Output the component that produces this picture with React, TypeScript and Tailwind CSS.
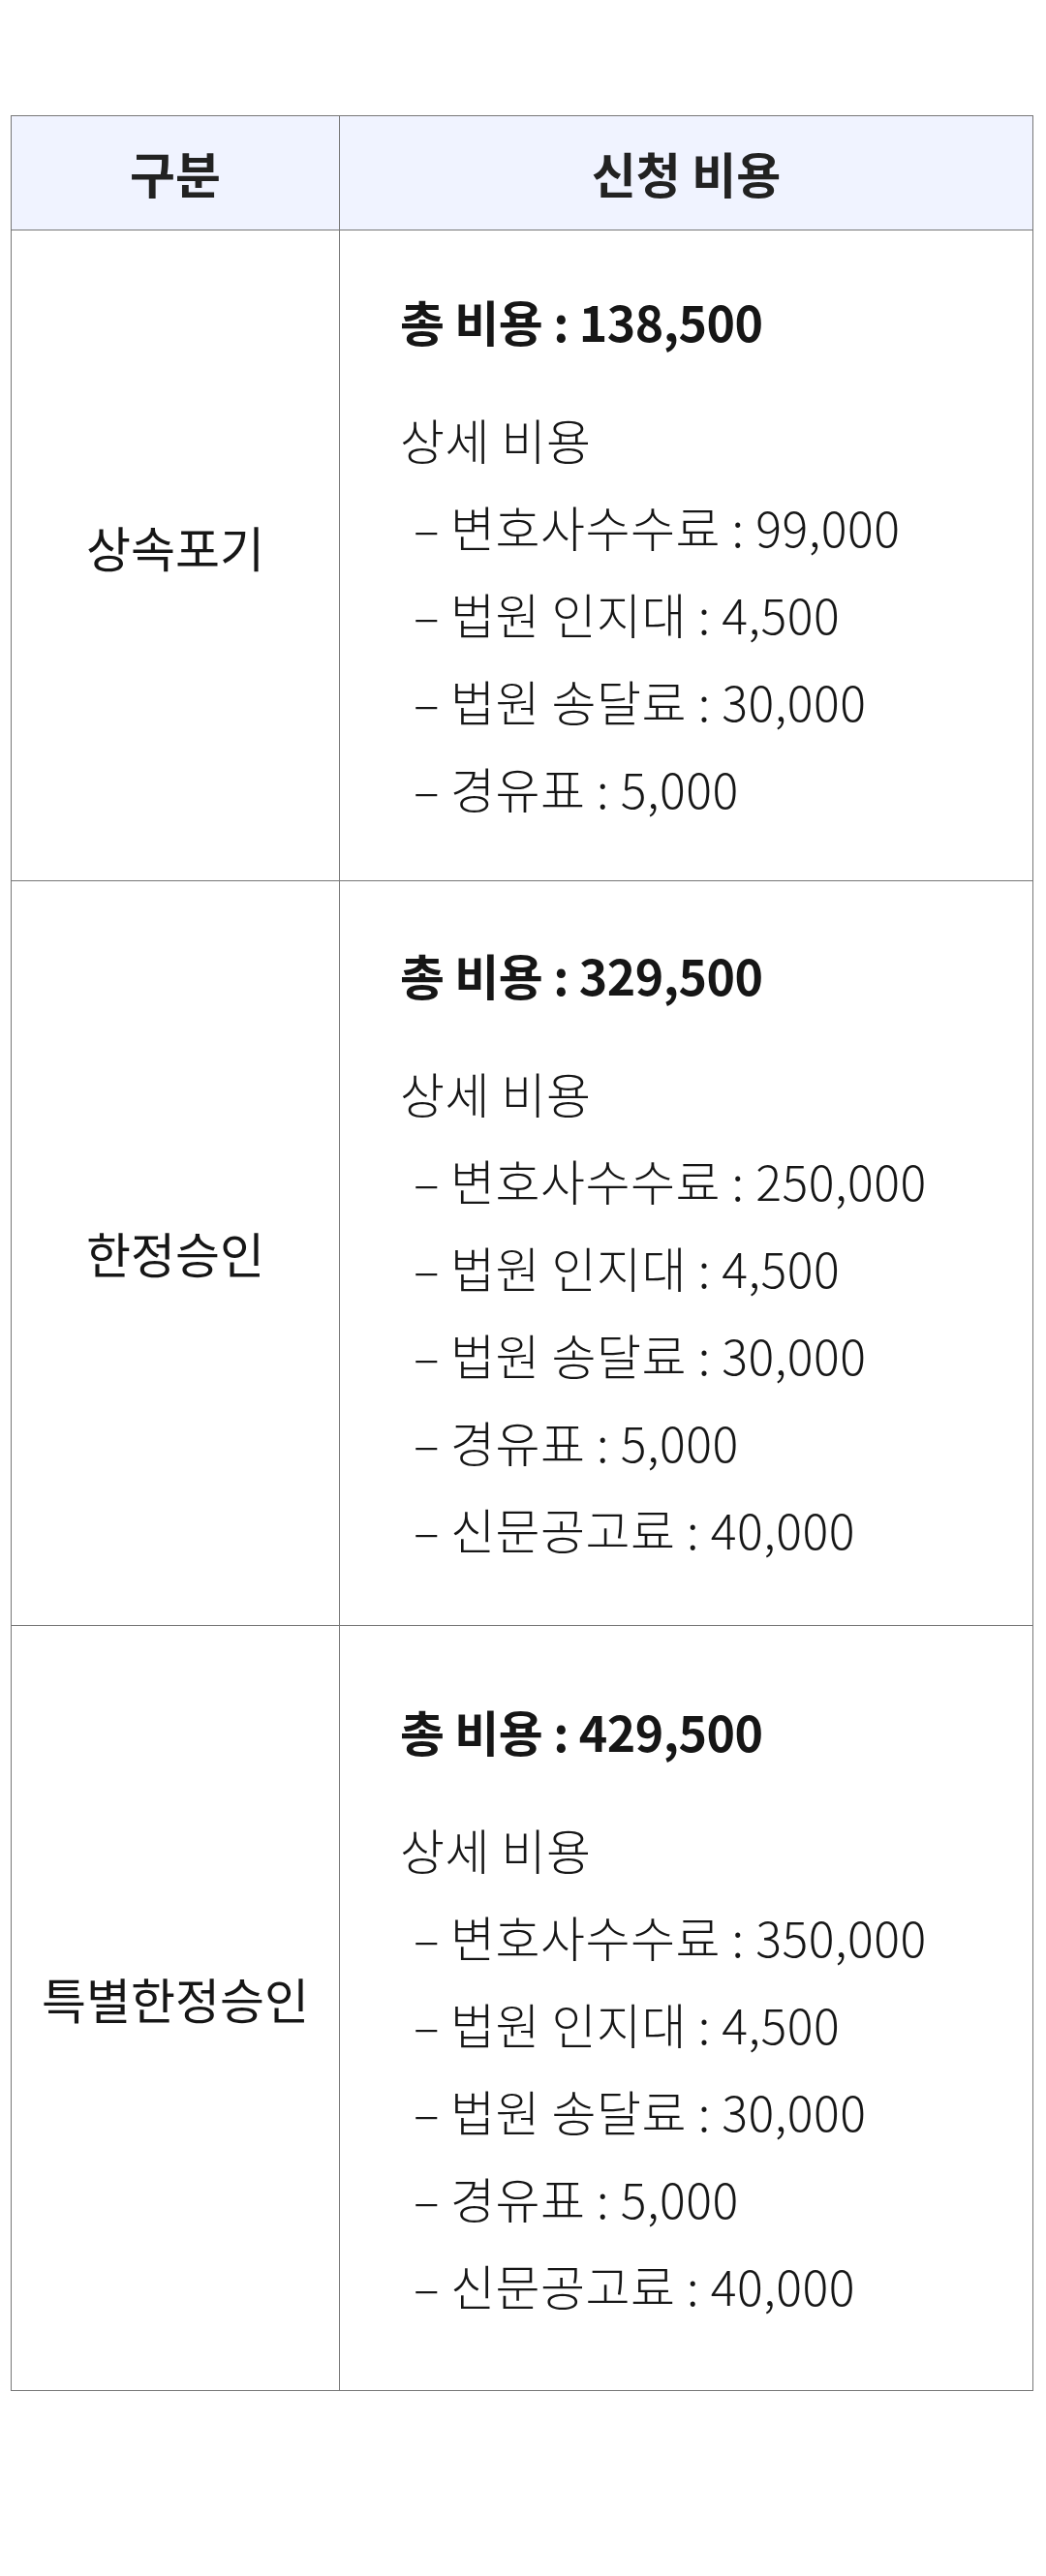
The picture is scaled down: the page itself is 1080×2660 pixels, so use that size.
import React from 'react';

type Row = {
    label: string;
    total: string;
    items: string[];
    pad: string;
    labelPad: string;
};

const rows: Row[] = [
    {
        label: '상속포기',
        total: '138,500',
        items: ['변호사수수료 : 99,000', '법원 인지대 : 4,500', '법원 송달료 : 30,000', '경유표 : 5,000'],
        pad: 'pt-[48px] pb-[51px]',
        labelPad: 'pb-[18px]',
    },
    {
        label: '한정승인',
        total: '329,500',
        items: ['변호사수수료 : 250,000', '법원 인지대 : 4,500', '법원 송달료 : 30,000', '경유표 : 5,000', '신문공고료 : 40,000'],
        pad: 'pt-[51px] pb-[55px]',
        labelPad: 'pb-[2px]',
    },
    {
        label: '특별한정승인',
        total: '429,500',
        items: ['변호사수수료 : 350,000', '법원 인지대 : 4,500', '법원 송달료 : 30,000', '경유표 : 5,000', '신문공고료 : 40,000'],
        pad: 'pt-[63px] pb-[64px]',
        labelPad: 'pb-[20px]',
    },
];

const font = "font-['Noto_Sans_CJK_KR','Noto_Sans',sans-serif]";

const CostCell: React.FC<{ row: Row }> = ({ row }) => (
    <div className={`pl-[62px] ${row.pad}`}>
        <p className="text-[50px] leading-[90px] font-bold text-[#161616] tracking-[-0.01em] whitespace-nowrap">
            총 비용 : {row.total}
        </p>
        <div className="mt-[32px] text-[50px] leading-[90px] font-light text-[#161616] tracking-[0.01em] whitespace-nowrap">
            <p>상세 비용</p>
            {row.items.map((item) => (
                <p key={item} className="pl-[14px]">
                    <span className="mr-[11px]">–</span>
                    {item}
                </p>
            ))}
        </div>
    </div>
);

export default function App() {
    return (
        <div className={`min-h-[2660px] bg-white pt-[119px] pl-[11px] ${font}`}>
            <table className="w-[1056px] border-collapse table-fixed">
                <thead>
                    <tr className="bg-[#f0f3ff] h-[118px]">
                        <th className="w-[339px] border border-[#777777] text-[51px] font-bold text-[#222222]">구분</th>
                        <th className="border border-[#777777] text-[50px] font-bold text-[#222222]">신청 비용</th>
                    </tr>
                </thead>
                <tbody>
                    {rows.map((row) => (
                        <tr key={row.label}>
                            <td className="border border-[#777777] text-center align-middle text-[50px] font-normal text-[#161616]">
                                <span className={`block ${row.labelPad}`}>{row.label}</span>
                            </td>
                            <td className="border border-[#777777] p-0 align-top">
                                <CostCell row={row} />
                            </td>
                        </tr>
                    ))}
                </tbody>
            </table>
        </div>
    );
}
